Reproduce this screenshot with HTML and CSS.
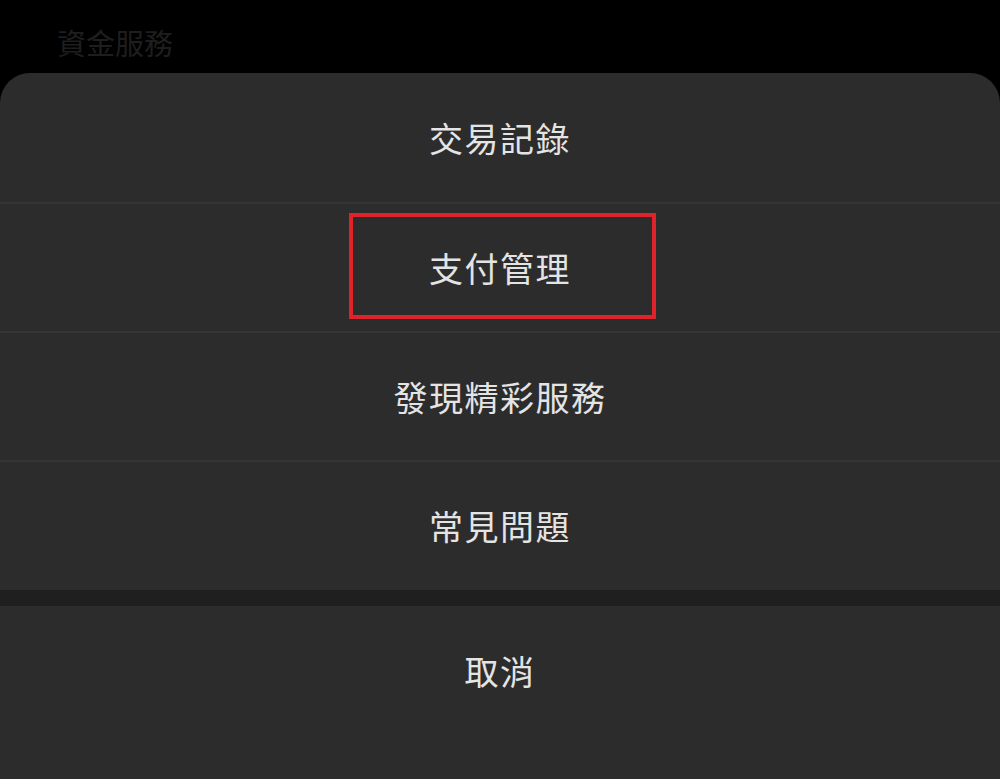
FILE: index.html
```html
<!DOCTYPE html>
<html lang="zh-Hant">
<head>
    <meta charset="UTF-8">
    <meta name="viewport" content="width=device-width, initial-scale=1.0">
    <title>資金服務</title>
    <link rel="stylesheet" href="styles.css">
</head>
<body>
    <div class="backdrop">
        <span class="backdrop-title">資金服務</span>
    </div>

    <div class="sheet">
        <div class="sheet-group">
            <div class="sheet-item">交易記錄</div>
            <div class="sheet-item highlighted">
                支付管理
                <span class="mark"></span>
            </div>
            <div class="sheet-item">發現精彩服務</div>
            <div class="sheet-item">常見問題</div>
        </div>
        <div class="sheet-gap"></div>
        <div class="sheet-cancel">取消</div>
    </div>
</body>
</html>
```

FILE: styles.css
```css
body {
    font-family: "Noto Sans CJK TC", "Noto Sans", sans-serif;
    background-color: #000;
    margin: 0;
    padding: 0;
    height: 779px;
    overflow: hidden;
    display: flex;
    flex-direction: column;
}
.backdrop {
    height: 73px;
    padding-left: 57px;
    box-sizing: border-box;
}
.backdrop-title {
    display: block;
    padding-top: 22px;
    font-size: 29px;
    line-height: 40px;
    color: #1e1e1e;
}
.sheet {
    flex: 1;
    background-color: #2c2c2c;
    border-radius: 30px 30px 0 0;
    display: flex;
    flex-direction: column;
}
.sheet-group {
    padding-bottom: 1px;
}
.sheet-item {
    position: relative;
    height: 129px;
    box-sizing: border-box;
    display: flex;
    justify-content: center;
    align-items: center;
    font-size: 34px;
    color: #e4e4e4;
    letter-spacing: 1.5px;
}
.sheet-item + .sheet-item {
    border-top: 2px solid #353535;
}
.sheet-item .mark {
    position: absolute;
    left: 349px;
    top: 9px;
    width: 307px;
    height: 106px;
    box-sizing: border-box;
    border: 4px solid #e0222b;
}
.sheet-gap {
    height: 16px;
    background-color: #1f1f1f;
}
.sheet-cancel {
    height: 128px;
    display: flex;
    justify-content: center;
    align-items: center;
    font-size: 34px;
    color: #e4e4e4;
    letter-spacing: 1.5px;
}
```
